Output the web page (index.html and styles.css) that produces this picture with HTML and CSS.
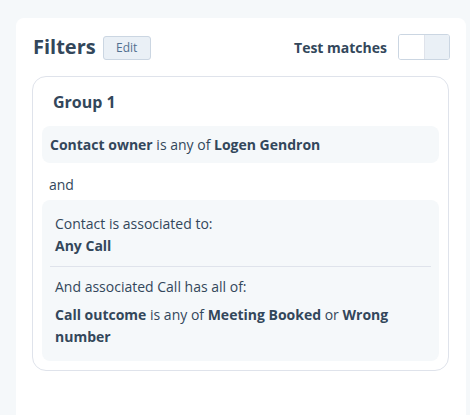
FILE: index.html
```html
<!DOCTYPE html>
<html>
<head>
<meta charset="utf-8">
<link rel="stylesheet" href="styles.css">
</head>
<body>
<div class="card">
  <div class="header">
    <div class="title-wrap">
      <h2 class="title">Filters</h2>
      <button class="edit-btn">Edit</button>
    </div>
    <div class="test-wrap">
      <span class="test-label">Test matches</span>
      <div class="toggle"><span class="toggle-on"></span><span class="toggle-off"></span></div>
    </div>
  </div>
  <div class="group">
    <div class="group-title">Group 1</div>
    <div class="cond cond-simple"><b>Contact owner</b> is any of <b>Logen Gendron</b></div>
    <div class="and">and</div>
    <div class="cond cond-assoc">
      <div class="section first">
        <div class="line">Contact is associated to:</div>
        <div class="line"><b>Any Call</b></div>
      </div>
      <div class="section second">
        <div class="line">And associated Call has all of:</div>
        <div class="line para"><b>Call outcome</b> is any of <b>Meeting Booked</b> or <b>Wrong</b> <b>number</b></div>
      </div>
    </div>
  </div>
</div>
</body>
</html>
```
FILE: styles.css
```css
* { box-sizing: border-box; }
html, body { margin: 0; padding: 0; }
body {
  background: #f5f8fa;
  font-family: "Open Sans", "Noto Sans", sans-serif;
  color: #33475b;
  padding: 18px 4px 0 16px;
  height: 415px;
  overflow: hidden;
}
.card {
  background: #ffffff;
  border-radius: 8px 8px 0 0;
  height: 397px;
  padding: 16px 16px 0 16px;
}
.header {
  display: flex;
  justify-content: space-between;
  align-items: center;
  height: 26px;
  padding-left: 1px;
}
.title-wrap { display: flex; align-items: center; gap: 7px; }
.title {
  margin: 0;
  font-size: 20px;
  font-weight: 700;
  line-height: 26px;
  color: #33475b;
}
.edit-btn {
  font-family: inherit;
  font-size: 12px;
  color: #516f90;
  background: #eaf0f6;
  border: 1px solid #cbd6e2;
  border-radius: 3px;
  height: 24px;
  width: 48px;
  padding: 0;
  margin-top: 1px;
}
.test-wrap { display: flex; align-items: center; gap: 11px; }
.test-label { font-size: 14px; font-weight: 700; }
.toggle {
  display: flex;
  width: 52px;
  height: 26px;
  border: 1px solid #cbd6e2;
  border-radius: 3px;
  overflow: hidden;
}
.toggle-on { flex: 1; background: #ffffff; border-right: 1px solid #dfe3eb; }
.toggle-off { flex: 1; background: #eaf0f6; }
.group {
  margin-top: 16px;
  border: 1px solid #dfe3eb;
  border-radius: 14px;
  padding: 14px 9px 9px 9px;
  width: 417px;
}
.group-title {
  font-size: 16px;
  font-weight: 700;
  line-height: 22px;
  padding-left: 11px;
  margin-bottom: 13px;
}
.cond {
  background: #f5f8fa;
  border-radius: 8px;
  font-size: 14px;
  line-height: 22px;
}
.cond-simple { padding: 8px 8px 7px 8px; }
.and {
  font-size: 14px;
  line-height: 22px;
  padding: 11px 7px 4px 7px;
}
.cond-assoc { padding: 13px 8px 13px 8px; }
.section { padding: 0 5px; }
.section.first { padding-bottom: 9px; border-bottom: 1px solid #dfe3eb; }
.section.second { padding-top: 9px; }
.line.para { margin-top: 6px; }
b { font-weight: 700; }
```
